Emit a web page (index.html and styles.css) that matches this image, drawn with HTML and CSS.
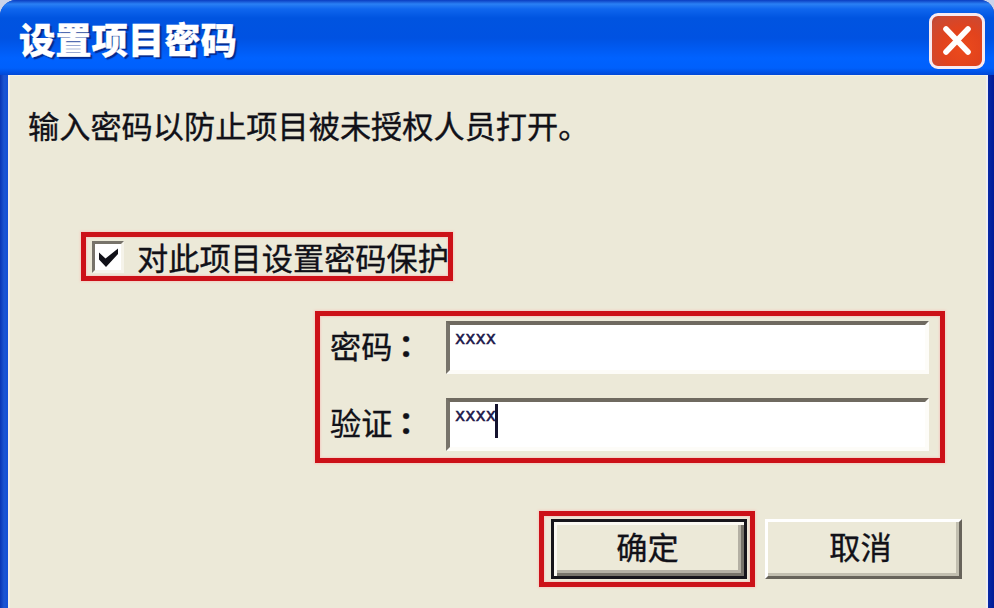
FILE: index.html
```html
<!DOCTYPE html>
<html lang="zh-CN">
<head>
<meta charset="utf-8">
<title>设置项目密码</title>
<link rel="stylesheet" href="styles.css">
</head>
<body>
<div class="window">
  <header class="titlebar">
    <h1 class="title">设置项目密码</h1>
    <button class="close" aria-label="关闭">
      <svg viewBox="0 0 56 56" width="56" height="56"><path d="M17 16L39 39M39 16L17 39" stroke="#fff" stroke-width="5.6" stroke-linecap="round"/></svg>
    </button>
  </header>
  <main class="content">
    <p class="message">输入密码以防止项目被未授权人员打开。</p>
    <label class="mark protect">
      <span class="checkbox"><svg viewBox="0 0 32 32" width="32" height="32"><path d="M7 11.5L13.5 17.5L26 7.500V13L14 26L7 18.500Z" fill="#111118"/></svg></span>
      <span class="protect-text">对此项目设置密码保护</span>
    </label>
    <section class="mark fields">
      <div class="row"><span class="label">密码<span class="colon" lang="ja">：</span></span><div class="input"><span class="stars">xxxx</span></div></div>
      <div class="row"><span class="label">验证<span class="colon" lang="ja">：</span></span><div class="input"><span class="stars">xxxx</span><span class="caret"></span></div></div>
    </section>
    <footer class="actions">
      <div class="mark ok-mark"><button class="button ok">确定</button></div>
      <button class="button cancel">取消</button>
    </footer>
  </main>
</div>
</body>
</html>
```
FILE: styles.css
```css
* { box-sizing: border-box; }
body {
  margin: 0;
  background: #c9d3ea;
  color: #111118;
  font-family: "Noto Sans CJK SC", sans-serif;
  font-size: 31.2px;
  -webkit-text-stroke: .35px;
  overflow: hidden;
}
.window {
  width: 994px;
  height: 608px;
  border-radius: 16px 14px 0 0;
  overflow: hidden;
  background: linear-gradient(90deg, #0a35b4 0, #1c55d2 4px, #1450d8 8px, #0a2ca8 987px, #001a96 994px);
}
.titlebar {
  height: 75px;
  padding: 0 9px 0 19px;
  display: flex;
  justify-content: space-between;
  align-items: flex-start;
  background: linear-gradient(#0a3cc0 0, #2a80f4 4px, #0f66ee 9px, #0054e0 18px, #0052e2 38px, #0062ff 58px, #0060fc 68px, #0148d6 75px);
}
.title {
  margin: 11px 0 0;
  font-size: 36.3px;
  line-height: 54px;
  font-weight: 900;
  color: #fff;
  text-shadow: 2px 2px 1px #052a8c;
}
.close {
  width: 56px;
  height: 56px;
  margin-top: 13px;
  padding: 0;
  border: 3px solid #f8eaf0;
  border-radius: 9px;
  background: radial-gradient(circle at 60% 65%, #ec4a1c 0, #e2431d 45%, #c94a35 85%, #b8402e 100%);
}
.close svg { display: block; margin: -3px; fill: none; }
.content {
  height: 533px;
  margin: 0 6px 0 8px;
  padding-top: 26px;
  background: #ece9d8;
  border-left: 2px solid #f5f1e8;
  border-right: 2px solid #eeeef4;
  border-top: 1px solid #f5f1e4;
}
.message { margin: 0 0 0 18px; line-height: 46px; white-space: nowrap; }
.mark { border: 5px solid #cc1118; box-shadow: 0 0 2px 1px #f3cfc5, inset 0 0 2px 1px #f3cfc5; }
.protect {
  display: flex;
  align-items: center;
  width: 372px;
  height: 49px;
  margin: 84px 0 0 71px;
  padding-left: 6px;
  white-space: nowrap;
}
.checkbox {
  width: 32px;
  height: 32px;
  flex: none;
  margin-right: 13px;
  background: #fff;
  border: 3px solid;
  border-color: #77736a #f5f3ea #f5f3ea #77736a;
}
.checkbox svg { display: block; margin: -3px; }
.protect-text { line-height: 38px; }
.fields {
  width: 630px;
  height: 152px;
  margin: 30px 0 0 305px;
  padding: 5px 10px 0;
  display: flex;
  flex-direction: column;
  gap: 24px;
}
.row { display: flex; height: 53px; }
.label { display: flex; width: 116px; line-height: 47px; white-space: nowrap; }
.colon { margin-left: -2px; font-family: "Noto Sans CJK JP", sans-serif; font-weight: 700; }
.input {
  width: 483px;
  height: 53px;
  display: flex;
  background: #fff;
  border: 4px solid;
  border-color: #6f6a60 #fdfcf8 #fdfcf8 #77736a;
  padding-left: 5px;
}
.stars { font: 17px/26px "DejaVu Sans Mono", monospace; color: #20184a; -webkit-text-stroke: .5px; }
.caret { width: 3px; height: 34px; margin: 2px 0 0 -1px; background: #15132e; }
.actions { display: flex; align-items: flex-start; margin: 48px 0 0 529px; }
.ok-mark { width: 216px; height: 76px; padding: 3px 2px 3px 7px; }
.button {
  display: block;
  padding: 0 0 6px;
  font: inherit;
  line-height: 46px;
  color: inherit;
  background: #ece9d8;
}
.ok {
  width: 196px;
  height: 60px;
  padding-right: 3px;
  border: 3px solid #17151b;
  box-shadow: inset 3px 3px #fbf9f2, inset -3px -3px #77736a, inset -6px -6px #b4b0a4;
}
.cancel {
  width: 197px;
  height: 60px;
  margin: 8px 0 0 10px;
  padding-right: 6px;
  border: 3px solid;
  border-color: #fff #67635a #67635a #fff;
  box-shadow: inset -3px -3px #c2bfb0;
}
```
